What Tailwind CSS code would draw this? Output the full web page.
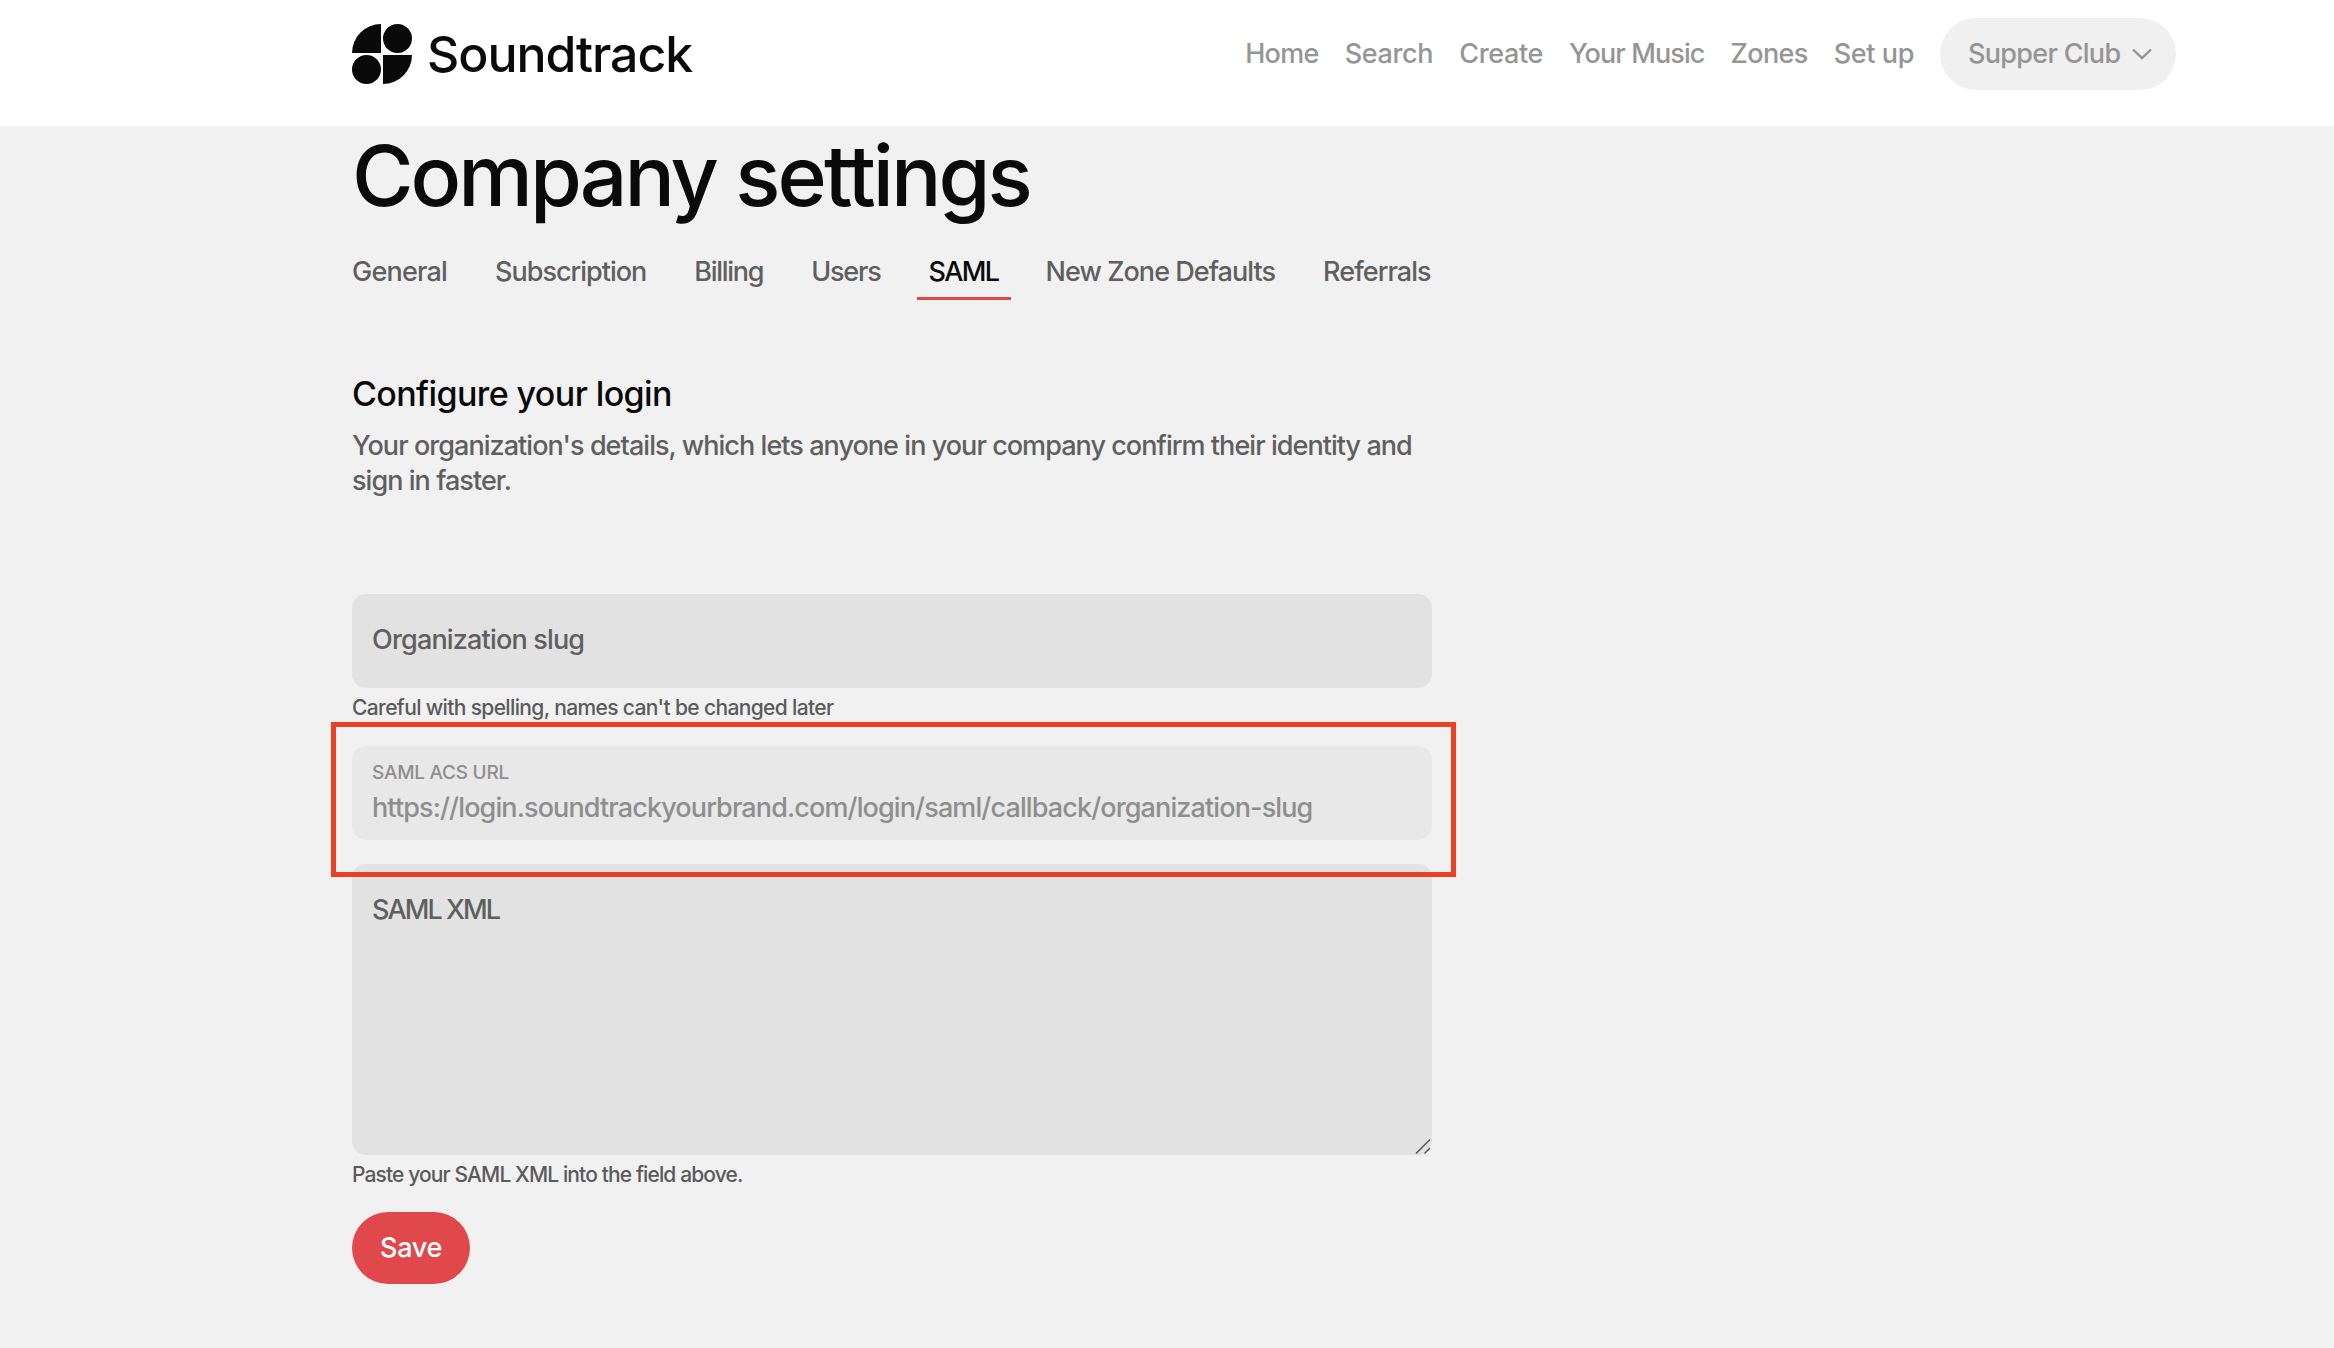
<!DOCTYPE html>
<html lang="en">
<head>
<meta charset="utf-8">
<title>Company settings</title>
<script src="https://cdn.jsdelivr.net/npm/@tailwindcss/browser@4"></script>
</head>
<body class="relative h-[1348px] w-[2334px] overflow-hidden bg-[#f1f1f1] font-['Inter',sans-serif]">
<header class="flex h-[126px] items-center justify-between bg-white pb-[18px] pl-[352px] pr-[158px]">
  <div class="flex items-center gap-[15px]">
    <svg class="h-[60px] w-[60px]" viewBox="0 0 60 60" fill="#0a0a0a"><path d="M29 0V29H0A29 29 0 0 1 29 0Z"/><circle cx="45.5" cy="14.5" r="14.5"/><circle cx="14.5" cy="45.5" r="14.5"/><path d="M31 31H60A29 29 0 0 1 31 60Z"/></svg>
    <span class="text-[50px] font-[550] leading-none tracking-[-1.05px] text-[#0a0a0a]">Soundtrack</span>
  </div>
  <nav class="flex items-center gap-[26px] whitespace-nowrap text-[27px] font-[450] text-[#959595]">
    <a class="tracking-[-0.7px]">Home</a><a class="tracking-[-0.35px]">Search</a><a class="tracking-[-0.35px]">Create</a><a class="tracking-[-0.9px]">Your Music</a><a class="tracking-[-0.6px]">Zones</a><a class="tracking-[-0.4px]">Set up</a>
    <button class="flex h-[72px] w-[236px] items-center justify-between rounded-full bg-[#f0f0f0] pl-[28px] pr-[24px] tracking-[-0.7px]">
      <span>Supper Club</span>
      <svg class="h-[14px] w-[20px]" viewBox="0 0 20 14" fill="none" stroke="#959595" stroke-width="2.4"><path d="M1 2.5L10 11L19 2.5"/></svg>
    </button>
  </nav>
</header>
<main class="ml-[352px] w-[1080px]">
  <h1 class="mt-[2px] whitespace-nowrap text-[84px] font-medium leading-[96px] tracking-[-3px] text-[#0a0a0a]">Company settings</h1>
  <div class="mt-[28px] flex whitespace-nowrap text-[27px] font-[450] text-[#5f5f5f]">
    <a class="h-[48px] pr-[48px] tracking-[-0.8px]">General</a>
    <a class="h-[48px] pr-[48px] tracking-[-1px]">Subscription</a>
    <a class="h-[48px] pr-[48px] tracking-[-1.3px]">Billing</a>
    <a class="h-[48px] pr-[36px] tracking-[-1.2px]">Users</a>
    <a class="h-[48px] border-b-[3px] border-[#e1484c] px-[12px] tracking-[-1.6px] text-[#0a0a0a]">SAML</a>
    <a class="ml-[35px] h-[48px] pr-[48px] tracking-[-0.95px]">New Zone Defaults</a>
    <a class="h-[48px] tracking-[-0.95px]">Referrals</a>
  </div>
  <h2 class="mt-[72px] text-[34px] font-medium leading-[44px] tracking-[-0.6px] text-[#0a0a0a]">Configure your login</h2>
  <p class="mt-[12px] w-[1080px] text-[27px] font-[450] leading-[35px] tracking-[-0.95px] text-[#5f5f5f]">Your organization's details, which lets anyone in your company confirm their identity and sign in faster.</p>
  <div class="mt-[96px] flex h-[94px] items-center rounded-[14px] bg-[#e2e2e2] px-[20px] pb-[2px] text-[27px] font-[450] tracking-[-0.82px] text-[#5f5f5f]">Organization slug</div>
  <p class="mt-[6px] h-[28px] text-[21px] font-[450] leading-[28px] tracking-[-0.64px] text-[#5a5a5a]">Careful with spelling, names can't be changed later</p>
  <div class="mt-[24px] flex h-[94px] flex-col justify-center rounded-[14px] bg-[#e8e8e8] px-[20px] text-[#8e8e8e]">
    <span class="text-[19px] font-[450] leading-[24px] tracking-[-0.25px]">SAML ACS URL</span>
    <span class="mt-[6px] text-[27px] font-[450] leading-[34px] tracking-[-0.88px]">https://login.soundtrackyourbrand.com/login/saml/callback/organization-slug</span>
  </div>
  <div class="relative mt-[24px] h-[291px] rounded-[14px] bg-[#e2e2e2] px-[20px] pt-[28px] text-[27px] font-[450] leading-[36px] tracking-[-1.9px] text-[#5f5f5f]">
    SAML XML
    <svg class="absolute bottom-0 right-0 h-[17px] w-[17px]" viewBox="0 0 17 17" fill="none" stroke="#5c5c5c" stroke-width="1.6"><path d="M1 15.5L15 1.5M9.5 15.5L15 10"/></svg>
  </div>
  <p class="mt-[6px] h-[28px] text-[21px] font-[450] leading-[28px] tracking-[-0.88px] text-[#5a5a5a]">Paste your SAML XML into the field above.</p>
  <button class="mt-[23px] h-[72px] w-[118px] rounded-full bg-[#e1484c] text-[27px] font-medium tracking-[-0.3px] text-white">Save</button>
</main>
<div class="absolute left-[331px] top-[722px] h-[155px] w-[1125px] border-[5px] border-[#ea4026]"></div>
</body>
</html>
